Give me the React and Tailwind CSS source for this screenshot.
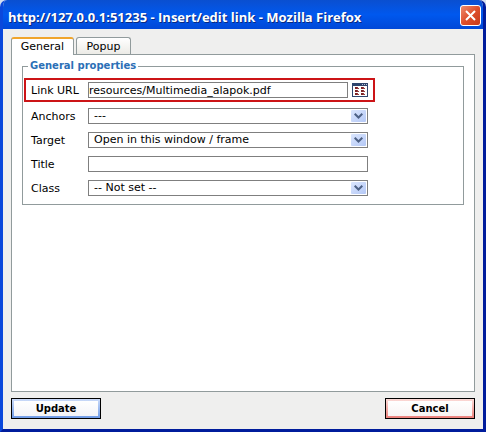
const targets = ['Open in this window / frame', 'Open in new window (_blank)'];

function SelectRow({ id, label, options }) {
  return (
    <div className="flex h-4 items-center">
      <label htmlFor={id} className="w-[57px] shrink-0 pt-px">{label}</label>
      <div className="relative h-4 flex-1">
        <select
          id={id}
          className="block h-4 w-full appearance-none border border-[#7f7f7f] bg-white pl-[5px] pr-5 text-[11px] leading-[14px] outline-none"
        >
          {options.map((o) => (
            <option key={o}>{o}</option>
          ))}
        </select>
        <span className="pointer-events-none absolute right-0.5 top-0.5 flex h-3 w-[15px] items-center justify-center rounded-[1px] bg-linear-to-br from-[#dbe6fd] to-[#b4c8f6]">
          <svg width="9" height="6" viewBox="0 0 9 6" fill="none" stroke="#4d6185" strokeWidth="2">
            <path d="M0.7 0.8L4.5 4.5L8.3 0.8" />
          </svg>
        </span>
      </div>
    </div>
  );
}

function BrowseIcon() {
  return (
    <svg width="16" height="14" viewBox="0 0 16 14" shapeRendering="crispEdges" className="block">
      <rect width="16" height="14" fill="#2f456d" />
      <rect x="1" y="3" width="14" height="10" fill="#fff" />
      <path d="M10 1h1v1h-1zM12 1h1v1h-1zM14 1h1v1h-1z" fill="#b9c6de" />
      <path d="M3 4h2v2H3zM3 7h2v2H3zM3 10h2v2H3zM9 4h2v2H9zM9 7h2v2H9zM9 10h2v2H9z" fill="#7d2326" />
      <path
        d="M5 4h1v1H5zM5 5h2v1H5zM5 7h1v1H5zM5 8h2v1H5zM5 10h1v1H5zM5 11h2v1H5zM11 4h1v1h-1zM11 5h2v1h-2zM11 7h1v1h-1zM11 8h2v1h-2zM11 10h1v1h-1zM11 11h2v1h-2z"
        fill="#963c3e"
      />
    </svg>
  );
}

export default function App() {
  return (
    <div className="flex min-h-screen flex-col bg-[#d5dff0] font-['DejaVu_Sans',Verdana,sans-serif] text-[11px] leading-3 text-black">
      <div className="flex flex-1 flex-col overflow-hidden rounded-t-[7px] border-x-3 border-b-3 border-l-[#0a48dc] border-r-[#001c9c] border-b-[#001c9c] bg-[#efefee]">
        <header className="-mx-[3px] flex h-[29px] items-center justify-between bg-linear-to-b from-[#0a4fd0] via-[#0058ee] to-[#0048d8] pl-2 pr-[5px]">
          <h1 className="whitespace-nowrap pt-1 font-['Open_Sans','Noto_Sans',sans-serif] text-[13px] font-bold leading-4 text-white [text-shadow:1px_1px_#0a2a80]">
            http://127.0.0.1:51235 - Insert/edit link - Mozilla Firefox
          </h1>
          <button
            type="button"
            aria-label="Close"
            className="mt-0.5 flex size-[21px] items-center justify-center rounded-[3px] border border-white bg-linear-to-br from-[#ee8a6c] via-[#dd4e2b] to-[#c8391a]"
          >
            <svg width="11" height="11" viewBox="0 0 11 11" stroke="#fff" strokeWidth="2">
              <path d="M1 1L10 10M10 1L1 10" />
            </svg>
          </button>
        </header>

        <main className="flex flex-1 flex-col px-2 pb-2.5 pt-2">
          <div role="tablist" className="relative flex h-[18px] gap-0.5">
            <button
              type="button"
              role="tab"
              aria-selected="true"
              className="h-[18px] w-[63px] rounded-t-[3px] border-x border-t-2 border-x-[#919b9c] border-t-[#f0a52c] bg-white"
            >
              General
            </button>
            <button
              type="button"
              role="tab"
              aria-selected="false"
              className="h-[17px] w-[55px] rounded-t-[3px] border border-b-0 border-[#919b9c] bg-linear-to-b from-white to-[#ecebe6] pt-px"
            >
              Popup
            </button>
          </div>

          <section role="tabpanel" className="-mt-px flex-1 border border-[#919b9c] bg-white px-2.5 pt-[5px]">
            <fieldset className="border border-[#919b9c] pb-2 pl-px">
              <legend className="ml-1 px-0.5 text-[10px] font-bold text-[#2b6fb6]">General properties</legend>
              <div className="mt-1.5 flex w-full max-w-[351px] flex-col">
                <div className="flex items-center border-2 border-[#cc1417] px-[5px] py-0.5">
                  <label htmlFor="href" className="w-[57px] shrink-0 whitespace-nowrap pt-px">Link URL</label>
                  <input
                    id="href"
                    type="text"
                    defaultValue="resources/Multimedia_alapok.pdf"
                    className="h-4 min-w-0 flex-1 border border-[#7f7f7f] bg-white text-[11px] leading-[14px] outline-none"
                  />
                  <button type="button" aria-label="Browse" className="ml-1 shrink-0">
                    <BrowseIcon />
                  </button>
                </div>
                <div className="mt-1.5 flex flex-col gap-2 pl-[7px] pr-[7px]">
                  <SelectRow id="anchors" label="Anchors" options={['---']} />
                  <SelectRow id="target" label="Target" options={targets} />
                  <div className="flex h-4 items-center">
                    <label htmlFor="title" className="w-[57px] shrink-0 pt-px">Title</label>
                    <input
                      id="title"
                      type="text"
                      className="h-4 min-w-0 flex-1 border border-[#7f7f7f] bg-white text-[11px] leading-[14px] outline-none"
                    />
                  </div>
                  <SelectRow id="class" label="Class" options={['-- Not set --']} />
                </div>
              </div>
            </fieldset>
          </section>

          <footer className="mt-1.5 flex justify-between text-[10px]">
            <button
              type="button"
              className="h-[21px] w-[90px] border border-black bg-linear-to-b from-[#cddcf9] to-[#6f9ae6] p-0.5 font-bold"
            >
              <span className="block h-[15px] bg-linear-to-b from-white to-[#f4f4f8] leading-[15px]">Update</span>
            </button>
            <button
              type="button"
              className="h-[21px] w-[90px] border border-black bg-linear-to-b from-[#fbdcd9] to-[#ea7f7b] p-0.5 font-bold"
            >
              <span className="block h-[15px] bg-linear-to-b from-white to-[#f8f4f4] leading-[15px]">Cancel</span>
            </button>
          </footer>
        </main>
      </div>
    </div>
  );
}
